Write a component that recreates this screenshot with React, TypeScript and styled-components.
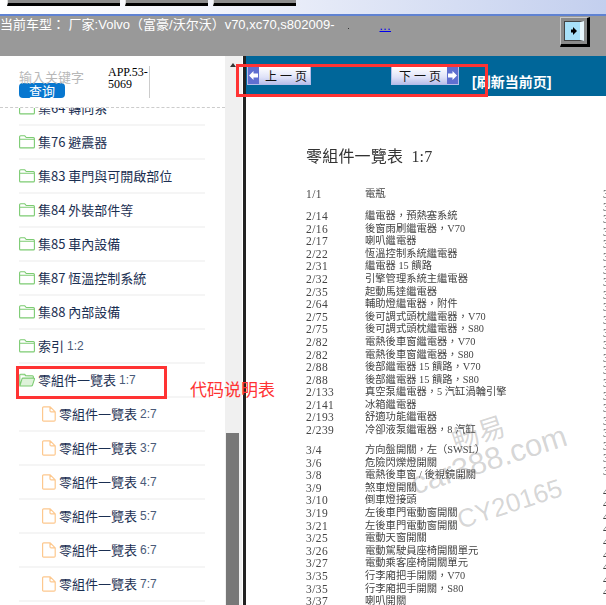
import styled, { createGlobalStyle } from 'styled-components';

const cjk = '"Noto Sans CJK TC", "Noto Sans CJK SC", sans-serif';

const GlobalStyle = createGlobalStyle`
    html, body {
        margin: 0;
        padding: 0;
        background: #fff;
    }
    * {
        box-sizing: border-box;
    }
`;

const Page = styled.div`
    position: relative;
    width: 606px;
    height: 605px;
    overflow: hidden;
    display: flex;
    flex-direction: column;
`;

const Chrome = styled.div`
    height: 16px;
    flex: none;
    display: flex;
    align-items: flex-start;
    gap: 5px;
    padding-left: 7px;
    background: linear-gradient(90deg, #ffffff 0%, #f2f4fb 35%, #c3cfee 100%);
    border-bottom: 2px solid #5f82d2;
`;

const ChromeButton = styled.div<{ $w: number }>`
    width: ${p => p.$w}px;
    height: 6px;
    background: #8c8c8c;
    border-bottom: 3px solid #000;
    border-left: 1px solid #ddd;
`;

const CarBand = styled.div`
    height: 40px;
    flex: none;
    background: #999;
    display: flex;
    align-items: flex-start;
    color: #fff;
    font: 13px/16px "Liberation Sans", ${cjk};
`;

const CarText = styled.span`
    margin-top: 1px;
    white-space: nowrap;
`;

const Dot = styled.i`
    width: 1px;
    height: 1px;
    margin: 12px 0 0 13px;
    background: #333;
`;

const MoreLink = styled.a`
    margin: 4px 0 0 31px;
    color: #00e;
    font: 12px/12px "Liberation Sans", sans-serif;
    letter-spacing: 0.5px;
    text-decoration: underline;
`;

const ToggleButton = styled.div`
    width: 30px;
    height: 30px;
    margin: 1px 16px 0 auto;
    padding: 3px 3px 3px 3px;
    background: #8a8a8a;
    border-style: solid;
    border-width: 1px 3px 3px 1px;
    border-color: #c8c8c8 #000 #000 #c8c8c8;
`;

const ToggleFace = styled.div`
    width: 100%;
    height: 100%;
    display: flex;
    align-items: center;
    justify-content: center;
    padding-left: 2px;
    background: #a8e0f8;
    border: 1px solid #444;
    border-right: 4px solid #e8f6fc;
`;

const Main = styled.div`
    flex: 1;
    min-height: 0;
    display: flex;
`;

const Sidebar = styled.div`
    width: 243px;
    flex: none;
    display: flex;
    border-right: 1px solid #fff;
`;

const SideContent = styled.div`
    width: 225px;
    flex: none;
    display: flex;
    flex-direction: column;
`;

const SearchArea = styled.div`
    height: 52px;
    flex: none;
    display: flex;
    align-items: flex-start;
    padding: 10px 0 0 19px;
    border-bottom: 1px dashed #ccc;
`;

const SearchForm = styled.div`
    width: 89px;
    flex: none;
    padding-top: 4px;
`;

const KeywordHint = styled.div`
    color: #b8b8b8;
    font: 13px/13px ${cjk};
`;

const QueryButton = styled.button`
    display: block;
    width: 46px;
    height: 15px;
    padding: 0;
    border: 0;
    border-radius: 4px;
    background: #0877cf;
    color: #fff;
    font: 13px/15px ${cjk};
`;

const AppCode = styled.div`
    width: 42px;
    height: 32px;
    border-right: 1px solid #ccc;
    color: #000;
    font: 12px/12px "Liberation Serif", serif;
    word-break: break-all;
`;

const TreeClip = styled.div`
    flex: 1;
    min-height: 0;
    overflow: hidden;
`;

const Tree = styled.ul`
    list-style: none;
    margin: -16px 0 0 19px;
    padding: 0;
    width: 186px;
`;

const TreeRow = styled.li<{ $child?: boolean }>`
    height: 34px;
    display: flex;
    align-items: center;
    gap: 3px;
    padding-left: ${p => (p.$child ? '23px' : '0')};
    border-bottom: 2px solid #f5f5f5;
    color: #1b2f52;
    font: 13px/16px ${cjk};
    white-space: nowrap;
`;

const TreeNum = styled.span`
    font: 12px/16px "Liberation Sans", sans-serif;
    color: #4a5a78;
`;

const ScrollTrack = styled.div`
    width: 17px;
    flex: none;
    display: flex;
    flex-direction: column;
    align-items: center;
    padding: 7px 3px 0 1px;
    background: #f0f0f0;
`;

const ScrollArrow = styled.div`
    width: 0;
    height: 0;
    border-style: solid;
    border-width: 0 3px 4px;
    border-color: transparent transparent #333;
`;

const ScrollThumb = styled.div`
    width: 13px;
    height: 172px;
    margin-top: auto;
    background: #787878;
`;

const Splitter = styled.div`
    width: 3px;
    flex: none;
    background: #222;
`;

const ContentPane = styled.div`
    flex: 1;
    min-width: 0;
    display: flex;
    flex-direction: column;
`;

const NavBar = styled.div`
    height: 40px;
    flex: none;
    display: flex;
    align-items: flex-start;
    background: #006699;
    padding: 10px 0 0 1px;
`;

const PageButton = styled.div<{ $w: number; $gap: number; $next?: boolean }>`
    width: ${p => p.$w}px;
    height: 19px;
    margin-left: ${p => p.$gap}px;
    display: flex;
    flex-direction: ${p => (p.$next ? 'row-reverse' : 'row')};
    align-items: stretch;
    border: 1px solid #b4bce8;
    background: linear-gradient(180deg, #ffffff 0%, #dfe2f8 60%, #b9bfea 100%);
    color: #111;
    font: 12px/17px ${cjk};
`;

const PageArrow = styled.span`
    width: 11px;
    flex: none;
    display: flex;
    align-items: center;
    justify-content: center;
    background: #5f6fd0;
`;

const PageLabel = styled.span<{ $inset: number }>`
    flex: 1;
    padding-left: ${p => p.$inset}px;
    text-align: center;
    letter-spacing: 3px;
    white-space: nowrap;
`;

const RefreshLink = styled.span`
    margin: 8px 0 0 13px;
    color: #fff;
    font: bold 14px/16px "Liberation Sans", ${cjk};
    white-space: nowrap;
`;

const Doc = styled.div`
    flex: 1;
    min-height: 0;
    overflow: hidden;
    padding: 52px 0 0 60px;
    background: #fff;
    color: #444;
    font: 10.3px/12.6px "Liberation Serif", ${cjk};
    filter: blur(0.4px);
`;

const DocTitle = styled.h1`
    margin: 0 0 22px;
    color: #333;
    font: 16px/18px "Liberation Serif", ${cjk};
    word-spacing: 4px;
    letter-spacing: 0.2px;
    white-space: nowrap;
`;

const DocColumns = styled.div`
    display: flex;
    width: 340px;
`;

const LeftColumn = styled.div`
    width: 297px;
    flex: none;
`;

const RightColumn = styled.div`
    flex: 1;
    font-size: 12px;
`;

const RowGroup = styled.div<{ $gap: number }>`
    margin-top: ${p => p.$gap}px;
`;

const DocRow = styled.div`
    display: flex;
    height: 12.6px;
    white-space: nowrap;
`;

const DocCode = styled.span`
    width: 59px;
    flex: none;
    font-size: 11.5px;
    letter-spacing: 0.4px;
`;

const RedBox = styled.div<{ $x: number; $y: number; $w: number; $h: number }>`
    position: absolute;
    left: ${p => p.$x}px;
    top: ${p => p.$y}px;
    width: ${p => p.$w}px;
    height: ${p => p.$h}px;
    border: 3px solid #f33;
`;

const RedNote = styled.div`
    position: absolute;
    left: 190px;
    top: 378px;
    color: #f33;
    font: 17px/22px ${cjk};
    white-space: nowrap;
`;

const Watermark = styled.div<{ $x: number; $y: number; $size: number }>`
    position: absolute;
    left: ${p => p.$x}px;
    top: ${p => p.$y}px;
    color: rgba(130, 130, 130, 0.32);
    font: ${p => p.$size}px/1 "Liberation Sans", ${cjk};
    transform: rotate(-18deg);
    transform-origin: left top;
    white-space: nowrap;
`;

const FolderIcon = ({ open }: { open?: boolean }) => (
    <svg width="16" height="16" viewBox="0 0 16 16" fill="none" stroke="#7ccb72" strokeWidth="1.1" strokeLinejoin="round">
        {open
            ? <path d="M.6 3.2c0-.7.4-1 1-1h4l1.2 1.6h6.6c.6 0 1 .4 1 1V6M.8 13.6V3M.8 14h11.6c.5 0 .8-.2 1-.7l2-6c.2-.7-.2-1.2-.8-1.2H4c-.5 0-.9.3-1 .7L.8 14z" fill="#b6e3ae" fillOpacity=".45" />
            : <path d="M.6 2.8c0-.6.4-1 1-1h4.2l1.4 1.7h7.2c.6 0 1 .4 1 1v8.4c0 .6-.4 1-1 1H1.6c-.6 0-1-.4-1-1V2.8zM.6 5.2h14.8" />}
    </svg>
);

const FileIcon = () => (
    <svg width="14" height="16" viewBox="0 0 14 16" fill="none" stroke="#fdc88e" strokeWidth="1.2" strokeLinejoin="round">
        <path d="M1.6.8h6.6l5 5v8.2c0 .7-.4 1.1-1.1 1.1H1.6c-.6 0-1-.4-1-1.1V1.9c0-.7.4-1.1 1-1.1zM8 .8v4c0 .7.4 1.1 1.1 1.1h4" />
    </svg>
);

const folders = [
    ['集64 轉向系', ''],
    ['集76 避震器', ''],
    ['集83 車門與可開啟部位', ''],
    ['集84 外裝部件等', ''],
    ['集85 車內設備', ''],
    ['集87 恆溫控制系統', ''],
    ['集88 內部設備', ''],
    ['索引', '1:2'],
];

const parts = ['2:7', '3:7', '4:7', '5:7', '6:7', '7:7'];

const docGroups: { gap: number; rows: [string, string][] }[] = [
    { gap: 0, rows: [['1/1', '電瓶']] },
    {
        gap: 9.4,
        rows: [
            ['2/14', '繼電器，預熱塞系統'],
            ['2/16', '後窗雨刷繼電器，V70'],
            ['2/17', '喇叭繼電器'],
            ['2/22', '恆溫控制系統繼電器'],
            ['2/31', '繼電器 15 饋路'],
            ['2/32', '引擎管理系統主繼電器'],
            ['2/35', '起動馬達繼電器'],
            ['2/64', '輔助燈繼電器，附件'],
            ['2/75', '後可調式頭枕繼電器，V70'],
            ['2/75', '後可調式頭枕繼電器，S80'],
            ['2/82', '電熱後車窗繼電器，V70'],
            ['2/82', '電熱後車窗繼電器，S80'],
            ['2/88', '後部繼電器 15 饋路，V70'],
            ['2/88', '後部繼電器 15 饋路，S80'],
            ['2/133', '真空泵繼電器，5 汽缸渦輪引擎'],
            ['2/141', '冰箱繼電器'],
            ['2/193', '舒適功能繼電器'],
            ['2/239', '冷卻液泵繼電器，8 汽缸'],
        ],
    },
    {
        gap: 7.4,
        rows: [
            ['3/4', '方向盤開關，左（SWSL）'],
            ['3/6', '危險閃爍燈開關'],
            ['3/8', '電熱後車窗 / 後視鏡開關'],
            ['3/9', '煞車燈開關'],
            ['3/10', '倒車燈接頭'],
            ['3/19', '左後車門電動窗開關'],
            ['3/21', '左後車門電動窗開關'],
            ['3/25', '電動天窗開關'],
            ['3/26', '電動駕駛員座椅開關單元'],
            ['3/27', '電動乘客座椅開關單元'],
            ['3/35', '行李廂把手開關，V70'],
            ['3/35', '行李廂把手開關，S80'],
            ['3/37', '喇叭開關'],
        ],
    },
];

const App = () => <>
    <GlobalStyle />
    <Page>
        <Chrome>
            <ChromeButton $w={113} />
            <ChromeButton $w={83} />
            <ChromeButton $w={83} />
        </Chrome>
        <CarBand>
            <CarText>当前车型： 厂家:Volvo（富豪/沃尔沃）v70,xc70,s802009-</CarText>
            <Dot />
            <MoreLink>...</MoreLink>
            <ToggleButton>
                <ToggleFace>
                    <svg width="6" height="8" viewBox="0 0 6 8"><path d="M2 0v2.500H0v3h2V8l4-4z" fill="#000" /></svg>
                </ToggleFace>
            </ToggleButton>
        </CarBand>
        <Main>
            <Sidebar>
                <SideContent>
                    <SearchArea>
                        <SearchForm>
                            <KeywordHint>输入关键字</KeywordHint>
                            <QueryButton>查询</QueryButton>
                        </SearchForm>
                        <AppCode>APP.53-5069</AppCode>
                    </SearchArea>
                    <TreeClip>
                        <Tree>
                            {folders.map(([label, num]) => <TreeRow key={label}>
                                <FolderIcon />
                                {label}{num && <TreeNum>{num}</TreeNum>}
                            </TreeRow>)}
                            <TreeRow>
                                <FolderIcon open />
                                零組件一覽表 <TreeNum>1:7</TreeNum>
                            </TreeRow>
                            {parts.map(num => <TreeRow $child key={num}>
                                <FileIcon />
                                零組件一覽表 <TreeNum>{num}</TreeNum>
                            </TreeRow>)}
                        </Tree>
                    </TreeClip>
                </SideContent>
                <ScrollTrack>
                    <ScrollArrow />
                    <ScrollThumb />
                </ScrollTrack>
            </Sidebar>
            <Splitter />
            <ContentPane>
                <NavBar>
                    <PageButton $w={64} $gap={0}>
                        <PageArrow>
                            <svg width="9" height="9" viewBox="0 0 9 9"><path d="M0 4.500 4.500 0v2.500H9v4H4.500V9z" fill="#fff" /></svg>
                        </PageArrow>
                        <PageLabel $inset={6}>上一页</PageLabel>
                    </PageButton>
                    <PageButton $w={68} $gap={80} $next>
                        <PageArrow>
                            <svg width="9" height="9" viewBox="0 0 9 9"><path d="M9 4.500 4.500 0v2.500H0v4h4.500V9z" fill="#fff" /></svg>
                        </PageArrow>
                        <PageLabel $inset={4}>下一页</PageLabel>
                    </PageButton>
                    <RefreshLink>[刷新当前页]</RefreshLink>
                </NavBar>
                <Doc>
                    <DocTitle>零組件一覽表 1:7</DocTitle>
                    <DocColumns>
                        <LeftColumn>
                            {docGroups.map(group => <RowGroup $gap={group.gap} key={group.rows[0][0]}>
                                {group.rows.map(([code, name], i) => <DocRow key={i}>
                                    <DocCode>{code}</DocCode>
                                    {name}
                                </DocRow>)}
                            </RowGroup>)}
                        </LeftColumn>
                        <RightColumn>
                            {Array.from({ length: 23 }, (_, i) => <DocRow key={i}>3</DocRow>)}
                            <RowGroup $gap={8}>
                                {Array.from({ length: 9 }, (_, i) => <DocRow key={i}>4</DocRow>)}
                            </RowGroup>
                        </RightColumn>
                    </DocColumns>
                </Doc>
            </ContentPane>
        </Main>
        <RedBox $x={236} $y={64} $w={252} $h={33} />
        <RedBox $x={16} $y={366} $w={151} $h={33} />
        <RedNote>代码说明表</RedNote>
        <Watermark $x={449} $y={430} $size={27}>畅易</Watermark>
        <Watermark $x={407} $y={470} $size={31}>car388.com</Watermark>
        <Watermark $x={454} $y={508} $size={26}>CY20165</Watermark>
    </Page>
</>;

export default App;
